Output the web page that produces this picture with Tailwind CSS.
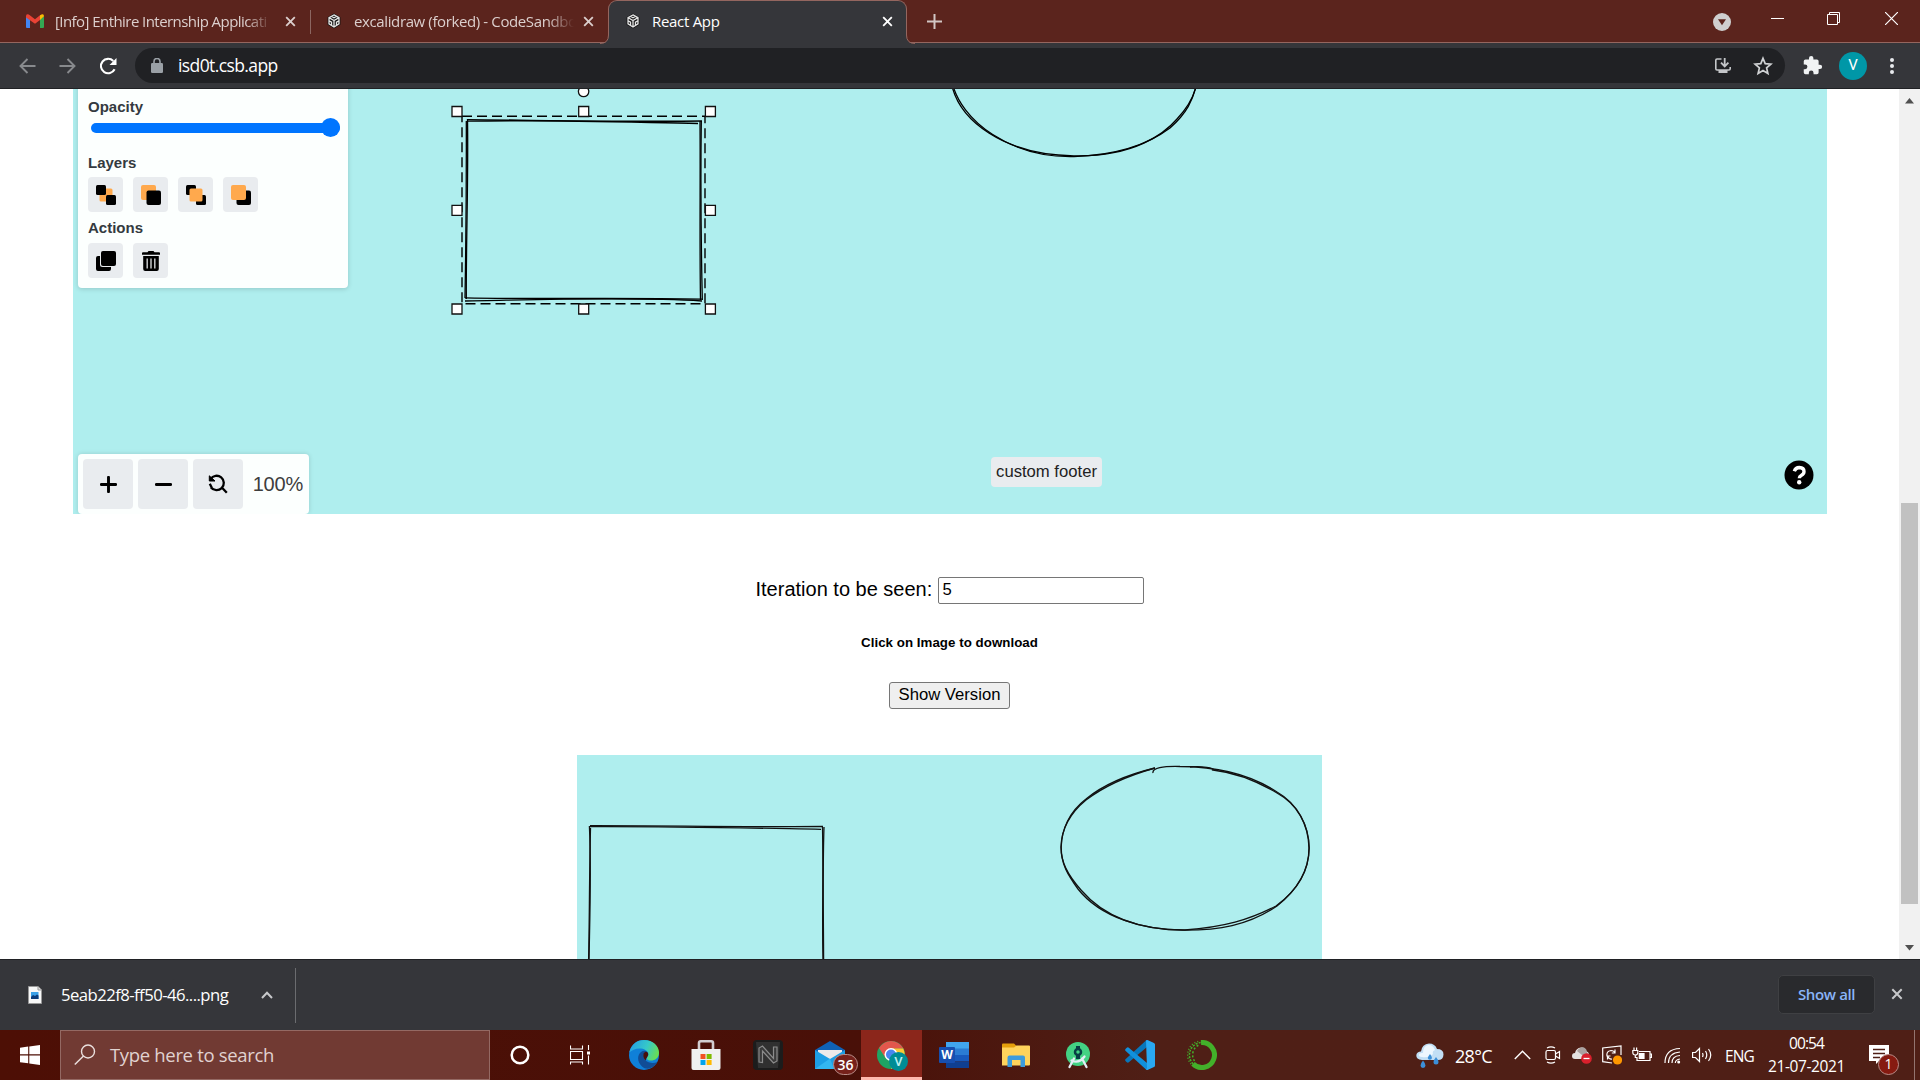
<!DOCTYPE html>
<html lang="en">
<head>
<meta charset="utf-8">
<title>React App</title>
<script src="https://cdn.jsdelivr.net/npm/@tailwindcss/browser@4"></script>
</head>
<body class="w-[1920px] h-[1080px] overflow-hidden flex flex-col bg-white font-['Open_Sans',sans-serif]">
<svg class="hidden">
  <symbol id="box" viewBox="0 0 16 18"><path d="M8 .5 15.3 4.7v8.6L8 17.5.7 13.3V4.7Z" fill="#111"/><path d="M8 2 13.7 5.1v7.2L8 15.8 2.300 12.300V5.100ZM2.300 5.200 8 8.500l5.700-3.300M8 8.500v7.200M5 3.600l3 1.800 3-1.800M2.500 8.800l2.700 1.600v3.500M13.500 8.800l-2.700 1.600v3.500" fill="none" stroke="#e4e4e4" stroke-width="1.500"/></symbol>
  <symbol id="x" viewBox="0 0 12 12"><path d="M1.300 1.300 10.700 10.700M10.700 1.300 1.300 10.700" fill="none" stroke="currentColor" stroke-width="2"/></symbol>
</svg>

<!-- tab strip -->
<header class="h-[43px] shrink-0 bg-[#5b241d] border-b border-[#94665f] flex relative text-[15px] leading-[40px] text-[#dccfcd] whitespace-nowrap">
  <div class="w-[310px] flex items-center pl-[26px]">
    <svg class="w-[18px] h-[14px] shrink-0" viewBox="0 0 18 14"><path d="M0 2v11q0 1 1 1h3V5Z" fill="#4285f4"/><path d="M18 2v11q0 1-1 1h-3V5Z" fill="#34a853"/><path d="M14 1.300 16 .2q2-.4 2 2L14 6Z" fill="#fbbc04"/><path d="M0 2.500Q0-.8 2.800.6L9 5.300 14 1.300V6L9 9.800 0 3.500Z" fill="#ea4335"/></svg>
    <span class="ml-[11px] w-[217px] tracking-[-0.56px] mask-r-from-88% mask-r-to-100%">[Info] Enthire Internship Applicati</span>
    <svg class="w-[11px] h-[11px] ml-[13px] shrink-0"><use href="#x"/></svg>
  </div>
  <div class="w-px h-6 mt-[10px] bg-[#8c6661]"></div>
  <div class="w-[297px] flex items-center pl-[16px]">
    <svg class="w-[14px] h-[16px] shrink-0"><use href="#box"/></svg>
    <span class="ml-[13px] w-[220px] tracking-[-0.38px] mask-r-from-88% mask-r-to-100%">excalidraw (forked) - CodeSandbo</span>
    <svg class="w-[11px] h-[11px] ml-[9px] shrink-0"><use href="#x"/></svg>
  </div>
  <div class="w-[299px] h-[43px] flex items-center pl-[17px] pb-[2px] bg-[#35363a] rounded-t-[9px] border-x border-t border-[#94665f] relative z-10 text-white">
    <svg class="w-[14px] h-[16px] shrink-0"><use href="#box"/></svg>
    <span class="ml-[12px] w-[224px] tracking-[-0.3px]">React App</span>
    <svg class="w-[11px] h-[11px] ml-[6px] shrink-0"><use href="#x"/></svg>
    <svg class="absolute -left-[9px] bottom-[-1px] w-[9px] h-[9px]" viewBox="0 0 9 9"><path d="M9 0V9H0Q8.500 8.500 8.500 0" fill="#35363a"/><path d="M0 8.500Q8.500 8.500 8.500 0" fill="none" stroke="#94665f"/></svg>
    <svg class="absolute -right-[9px] bottom-[-1px] w-[9px] h-[9px]" viewBox="0 0 9 9"><path d="M0 0V9H9Q.5 8.500 .5 0" fill="#35363a"/><path d="M9 8.500Q.5 8.500 .5 0" fill="none" stroke="#94665f"/></svg>
  </div>
  <svg class="w-[15px] h-[15px] ml-[20px] mt-[14px]" viewBox="0 0 15 15"><path d="M7.500 0v15M0 7.500h15" stroke="#d2c6c4" stroke-width="2"/></svg>
  <div class="flex-1"></div>
  <svg class="w-[18px] h-[18px] mt-[13px]" viewBox="0 0 18 18"><circle cx="9" cy="9" r="9" fill="#cfcfcf"/><path d="M5 6.300h8L9 12.300Z" fill="#5b241d"/></svg>
  <svg class="w-[13px] h-[13px] ml-[40px] mt-[12px]" viewBox="0 0 13 13"><path d="M0 6.500h13" stroke="#fff"/></svg>
  <svg class="w-[13px] h-[13px] ml-[43px] mt-[12px]" viewBox="0 0 13 13"><path d="M.5 2.500h10v10H.5ZM2.500 2.500V.5h10v10h-2" fill="none" stroke="#fff"/></svg>
  <svg class="w-[13px] h-[13px] ml-[45px] mr-[22px] mt-[12px]" viewBox="0 0 13 13"><path d="M0 0 13 13M13 0 0 13" fill="none" stroke="#fff" stroke-width="1.200"/></svg>
</header>

<!-- address bar -->
<nav class="h-[46px] shrink-0 bg-[#35363a] border-b border-[#202124] flex items-center">
  <svg class="w-[17px] h-[16px] ml-[19px]" viewBox="0 0 17 16"><path d="M16.500 8H2M8.500 1 1.500 8l7 7" fill="none" stroke="#888a8d" stroke-width="1.900"/></svg>
  <svg class="w-[17px] h-[16px] ml-[23px]" viewBox="0 0 17 16"><path d="M.5 8H15M8.500 1l7 7-7 7" fill="none" stroke="#888a8d" stroke-width="1.900"/></svg>
  <svg class="w-[18px] h-[18px] ml-[23px]" viewBox="0 0 18 18"><path d="M15.600 12.200A7.200 7.200 0 1 1 14.300 4" fill="none" stroke="#fff" stroke-width="2.100"/><path d="M17.500 1v7h-7Z" fill="#fff"/></svg>
  <div class="ml-[18px] w-[1650px] h-[35px] rounded-full bg-[#202124] flex items-center">
    <svg class="w-[12px] h-[15px] ml-[16px]" viewBox="0 0 12 15"><rect y="5" width="12" height="10" rx="1.200" fill="#9aa0a6"/><path d="M3 6V3.500a3 3 0 0 1 6 0V6" fill="none" stroke="#9aa0a6" stroke-width="1.600"/></svg>
    <span class="ml-[15px] text-[17.500px] text-white tracking-[-0.6px] leading-none">isd0t.csb.app</span>
    <div class="flex-1"></div>
    <svg class="w-[16px] h-[16px]" viewBox="0 0 16 16"><path d="M6.500 1H2Q.8 1 .8 2.200v8.600Q.8 12 2 12h12q1.200 0 1.200-1.200V9" fill="none" stroke="#c4c6c9" stroke-width="1.600"/><path d="M3.500 12h9v3h-9Z" fill="#c4c6c9"/><path d="M9.700 0v8M6 4.700l3.700 3.800 3.700-3.800" fill="none" stroke="#c4c6c9" stroke-width="1.800"/></svg>
    <svg class="w-[20px] h-[20px] ml-[22px] mr-[12px]" viewBox="0 0 20 20"><path d="m10 2.300 2.200 5.300 5.700.5-4.300 3.800 1.300 5.600-4.900-3-4.900 3 1.300-5.600L2.100 8.100l5.700-.5Z" fill="none" stroke="#d0d2d4" stroke-width="1.700"/></svg>
  </div>
  <svg class="w-[21px] h-[21px] ml-[17px]" viewBox="0 0 24 24"><path d="M20.500 11H19V7a2 2 0 0 0-2-2h-4V3.500a2.500 2.500 0 0 0-5 0V5H4a2 2 0 0 0-2 2v3.800h1.500a2.700 2.700 0 0 1 0 5.400H2V20a2 2 0 0 0 2 2h3.800v-1.500a2.700 2.700 0 0 1 5.400 0V22H17a2 2 0 0 0 2-2v-4h1.500a2.500 2.500 0 0 0 0-5Z" fill="#f1f3f4"/></svg>
  <div class="ml-[16px] w-[28px] h-[28px] rounded-full bg-[#0097a7] text-white text-[15px] font-[Roboto,sans-serif] flex items-center justify-center">V</div>
  <svg class="w-[4px] h-[16px] ml-[23px]" viewBox="0 0 4 16"><g fill="#e8eaed"><circle cx="2" cy="2" r="2"/><circle cx="2" cy="8" r="2"/><circle cx="2" cy="14" r="2"/></g></svg>
</nav>

<!-- page -->
<div class="h-[870px] shrink-0 flex overflow-hidden font-['Liberation_Sans',Arial,sans-serif]">
  <main class="w-[1899px] flex flex-col items-center overflow-hidden">
    <section class="relative w-[1754px] h-[425px] shrink-0 ml-px bg-[#afeeee] overflow-hidden">
      <svg class="absolute inset-0 w-full h-full" viewBox="73 89 1754 425" fill="none" stroke="#000">
        <g stroke-width="1.300">
          <path d="M467 119.600C530 120 620 122 702 121"/><path d="M467 121.200C550 119.500 620 122 698 123.500"/>
          <path d="M467.500 119C468.500 180 466 240 466.300 299"/><path d="M466.300 121C466.500 180 466 240 465 298"/>
          <path d="M700 121C700.500 180 699.500 240 700.500 300"/><path d="M701.300 121C700.500 180 701 240 702.300 300"/>
          <path d="M465 297.800C540 299.500 620 297.500 702 299.200"/><path d="M465 301C530 300 630 296.500 702 301"/>
          <path d="M950.800 80C957 121 1005 155 1074 155.800C1135 157 1165 133 1177 119C1190 105 1195 93 1196.500 84"/>
          <path d="M951.500 80C960 122 1012 158 1074 156.600C1120 155 1150 143 1170 128C1187 113 1193 100 1196.500 84"/>
        </g>
        <path d="M462 116.300H705V303.800H462Z" stroke-width="1.400" stroke-dasharray="10 5"/>
        <g fill="#fff" stroke="#111" stroke-width="1.300">
          <circle cx="583.600" cy="91.500" r="5.200"/>
          <path d="M452 106.500h10v10h-10ZM578.700 106.500h10v10h-10ZM705.400 106.500h10v10h-10ZM452 205.300h10v10h-10ZM705.400 205.300h10v10h-10ZM452 304h10v10h-10ZM578.700 304h10v10h-10ZM705.400 304h10v10h-10Z"/>
        </g>
      </svg>

      <aside class="absolute left-[5px] -top-[21px] w-[270px] h-[220px] pt-[30px] px-[10px] bg-[#fcfffe] rounded-[4px] shadow-[0_1px_5px_rgba(0,0,0,0.16)] flex flex-col text-[15px] leading-[18px] font-bold text-[#343a40]">
        <div>Opacity</div>
        <div class="mt-[2px] ml-[3px] w-[249px] h-[19px] flex items-center"><div class="h-[10px] flex-1 rounded-full bg-[#0075ff]"></div><div class="w-[19px] h-[19px] -ml-[19px] rounded-full bg-[#0075ff]"></div></div>
        <div class="mt-[17px]">Layers</div>
        <div class="mt-[5px] flex gap-[10px]">
          <div class="w-[35px] h-[35px] rounded-[4px] bg-[#e9ecef] flex items-center justify-center"><svg class="w-5 h-5" viewBox="0 0 20 20"><rect x="3.500" y="3.500" width="13" height="13" rx="1.500" fill="#ffa94d"/><rect width="10" height="10" rx="1.500"/><rect x="10" y="10" width="10" height="10" rx="1.500"/></svg></div>
          <div class="w-[35px] h-[35px] rounded-[4px] bg-[#e9ecef] flex items-center justify-center"><svg class="w-5 h-5" viewBox="0 0 20 20"><rect width="15" height="15" rx="2" fill="#ffa94d"/><rect x="5.500" y="5.500" width="14.500" height="14.500" rx="2"/></svg></div>
          <div class="w-[35px] h-[35px] rounded-[4px] bg-[#e9ecef] flex items-center justify-center"><svg class="w-5 h-5" viewBox="0 0 20 20"><rect width="10" height="10" rx="1.500"/><rect x="10" y="10" width="10" height="10" rx="1.500"/><rect x="3.500" y="3.500" width="13" height="13" rx="1.500" fill="#ffa94d"/></svg></div>
          <div class="w-[35px] h-[35px] rounded-[4px] bg-[#e9ecef] flex items-center justify-center"><svg class="w-5 h-5" viewBox="0 0 20 20"><rect x="5.500" y="5.500" width="14.500" height="14.500" rx="2"/><rect width="15" height="15" rx="2" fill="#ffa94d"/></svg></div>
        </div>
        <div class="mt-[7px]">Actions</div>
        <div class="mt-[6px] flex gap-[10px]">
          <div class="w-[35px] h-[35px] rounded-[4px] bg-[#e9ecef] flex items-center justify-center"><svg class="w-5 h-5" viewBox="0 0 20 20"><rect x="5" width="15" height="15" rx="2"/><path d="M4 5H2Q0 5 0 7v11q0 2 2 2h11q2 0 2-2v-2H6.500Q4 16 4 13.500Z"/></svg></div>
          <div class="w-[35px] h-[35px] rounded-[4px] bg-[#e9ecef] flex items-center justify-center"><svg class="w-[18px] h-5" viewBox="0 0 18 20"><path d="M0 2.200Q0 1.300 1 1.300H5.500L6.500 0h5l1 1.300H17q1 0 1 .9V3.700H0ZM1.200 5H16.800V18q0 2-2 2H3.200q-2 0-2-2Z"/><path d="M5.200 7.500v10M9 7.500v10M12.800 7.500v10" stroke="#c4c6c8" stroke-width="1.500"/></svg></div>
        </div>
      </aside>

      <div class="absolute left-[5px] top-[365px] w-[231px] h-[60px] p-[5px] flex gap-[5px] bg-[#fcfffe] rounded-[4px] shadow-[0_0_5px_rgba(0,0,0,0.14)] text-[20px] text-[#3d3d3d]">
        <div class="w-[50px] h-[50px] rounded-[4px] bg-[#e9ecef] flex items-center justify-center"><svg class="w-[17px] h-[17px]" viewBox="0 0 17 17"><path d="M8.500 1.300v14.400M1.300 8.500h14.400" stroke="#000" stroke-width="2.900" stroke-linecap="round"/></svg></div>
        <div class="w-[50px] h-[50px] rounded-[4px] bg-[#e9ecef] flex items-center justify-center"><svg class="w-[17px] h-[17px]" viewBox="0 0 17 17"><path d="M1.400 8.500h14.200" stroke="#000" stroke-width="3" stroke-linecap="round"/></svg></div>
        <div class="w-[50px] h-[50px] rounded-[4px] bg-[#e9ecef] flex items-center justify-center"><svg class="w-[20px] h-[20px]" viewBox="0 0 20 20" fill="none" stroke="#000" stroke-width="2.300"><path d="M2.600 5A7.200 7.200 0 1 1 3 13.500M14.300 14l4.500 4.800"/><path d="M1.300 1.800V7H7Z" fill="#000" stroke-width="1"/><path d="M1.800 9.800 3.800 13.800"/></svg></div>
        <div class="flex-1 flex items-center justify-end pr-px tracking-[-0.2px]">100%</div>
      </div>
      <div class="absolute left-[918px] top-[368px] w-[111px] h-[30px] bg-[#e9ecef] rounded-[4px] text-[16.670px] leading-[29px] text-[#222] text-center">custom footer</div>
      <svg class="absolute left-[1711px] top-[371px] w-[30px] h-[30px]" viewBox="0 0 30 30"><circle cx="15" cy="15" r="14.500"/><path d="M10.300 11.300Q11.500 7.500 15.300 7.500Q20 7.700 20 11.500Q20 14 17.500 15.300Q15.300 16.500 15.300 18.200" fill="none" stroke="#fff" stroke-width="3.400"/><circle cx="15.200" cy="22.200" r="2.200" fill="#fff"/></svg>
    </section>

    <section class="flex flex-col items-center text-black">
      <label class="mt-[63px] h-[27px] flex items-center text-[20px] leading-[22px]"><span class="pb-[3px] w-[182px]">Iteration to be seen:</span><span class="w-[206px] h-[27px] border border-[#767676] rounded-[2px] pl-1 text-[16.670px] leading-[24px]">5</span></label>
      <h5 class="mt-[31px] h-[16px] text-[13.300px] leading-[16px] font-bold tracking-[0.04px]">Click on Image to download</h5>
      <button class="mt-[31px] w-[121px] h-[27px] border border-[#767676] rounded-[3px] bg-[#efefef] text-[16.670px] leading-[22px] pb-[2px]">Show Version</button>
      <svg class="mt-[46px] w-[745px] h-[204px] bg-[#afeeee] shrink-0" viewBox="577 755 745 204" fill="none" stroke="#111" stroke-width="1.300">
        <path d="M590 825.600C660 825.500 740 827 823 826.500"/><path d="M590 826.600C680 826.300 750 828 821 829.300"/>
        <path d="M589.400 826C591.500 870 589.700 920 589 960"/><path d="M590.500 828C589.300 880 589.500 920 588.600 960"/>
        <path d="M822.500 827C823.500 870 822 920 823 960"/><path d="M824 827C822.500 870 823.500 920 823.600 960"/>
        <path d="M1153 773C1152 768 1163 766 1180 766.500C1213 766.500 1248 773 1277 792C1298 804 1309 826 1309.200 848C1309 870 1297 890 1277 906C1247 926 1218 930 1185 930.200C1138 930 1104 917 1081 890C1067 874 1061 862 1061.200 847C1061.500 830 1069 812 1086 799C1103 785 1126 775 1155 768"/>
        <path d="M1155 768C1123 777 1103 787 1086 800C1069 814 1061.500 830 1061 847C1061 864 1068 875 1078 889C1100 917 1143 930.500 1185 930C1224 927 1249 920 1276 906C1298 890 1309 870 1309 848C1308.500 824 1297 804 1277 793C1252 778 1230 772 1213 770C1215 768 1202 766 1190 767"/>
      </svg>
    </section>
  </main>
  <div class="w-[21px] bg-[#f1f1f1] flex flex-col items-center">
    <svg class="w-[9px] h-[6px] mt-[9px]" viewBox="0 0 9 6"><path d="M4.500 0 9 5.500H0Z" fill="#505050"/></svg>
    <div class="mt-[399px] w-[17px] h-[401px] bg-[#c1c1c1]"></div>
    <svg class="w-[9px] h-[6px] mt-[41px]" viewBox="0 0 9 6"><path d="M4.500 5.500 9 0H0Z" fill="#505050"/></svg>
  </div>
</div>

<!-- downloads -->
<div class="h-[71px] shrink-0 bg-[#35363a] border-t border-[#202124] flex items-center text-white">
  <svg class="w-[14px] h-[18px] ml-[28px] mb-px" viewBox="0 0 14 18"><path d="M.5.500H10l3.500 3.500v13.500H.5Z" fill="#f7f7f7" stroke="#999"/><path d="M10 .5V4h3.500" fill="#ddd" stroke="#999"/><rect x="3" y="6" width="7.500" height="7" fill="#3aa0e8"/><path d="m3 11 2-2 2 1 2-1.500 1.500 1V13H3Z" fill="#0b3a7a"/></svg>
  <span class="ml-[19px] w-[200px] text-[16.700px] tracking-[-0.55px]">5eab22f8-ff50-46....png</span>
  <svg class="w-[12px] h-[8px]" viewBox="0 0 12 8"><path d="M1 7 6 1.800 11 7" fill="none" stroke="#c8c9cb" stroke-width="2"/></svg>
  <div class="ml-[22px] w-px h-[55px] bg-[#6b6c6f]"></div>
  <div class="flex-1"></div>
  <div class="w-[97px] h-[39px] mr-[16px] mb-[2px] rounded-[5px] border border-[#3f4043] bg-[#292a2d] text-[#8ab4f8] text-[15px] font-semibold tracking-[-0.36px] flex items-center justify-center">Show all</div>
  <svg class="w-[12px] h-[12px] mr-[17px] mb-[2px] text-[#c8c9cb]"><use href="#x"/></svg>
</div>

<!-- taskbar -->
<footer class="h-[50px] shrink-0 flex bg-linear-to-r from-[#4d0f05] from-0% via-[#491008] via-45% to-[#4f1f16] to-60% text-white">
  <div class="w-[60px] flex items-center justify-center"><svg class="w-5 h-5" viewBox="0 0 20 20"><path d="M0 2.700 8.200 1.600V9.300H0ZM9.300 1.400 20 0V9.300H9.300ZM0 10.500H8.200V18.300L0 17.200ZM9.300 10.500H20V20L9.300 18.500Z" fill="#fff"/></svg></div>
  <div class="w-[430px] h-[50px] bg-[#713a33] border border-[#946963] flex items-center">
    <svg class="w-[22px] h-[22px] ml-[13px]" viewBox="0 0 22 22"><circle cx="14" cy="7.500" r="6.500" fill="none" stroke="#eadfdd" stroke-width="1.400"/><path d="M9.500 12 .8 20.500" stroke="#eadfdd" stroke-width="1.500"/></svg>
    <span class="ml-[14px] text-[18.500px] tracking-[-0.33px] text-[#e0d2d0]">Type here to search</span>
  </div>
  <div class="w-[60px] flex items-center justify-center"><svg class="w-5 h-5" viewBox="0 0 20 20"><circle cx="10" cy="10" r="8.300" fill="none" stroke="#fff" stroke-width="2.500"/></svg></div>
  <div class="w-[60px] mr-[3px] flex items-center justify-center"><svg class="w-5 h-5" viewBox="0 0 20 20" fill="none" stroke="#fff" stroke-width="1.100"><path d="M.5.500V4H12.500V.5M.5 6.500h12v8H.5ZM.5 19.500V17H12.500V19.500M18.500 0V5M18.500 10.500V19.500"/><path d="M17 6.500h3v3h-3Z" fill="#fff" stroke="none"/></svg></div>
  <div class="w-[62px] flex items-center justify-center"><svg class="w-[30px] h-[30px]" viewBox="0 0 30 30"><defs><linearGradient id="eg" x1="0" x2="1" y1=".3" y2=".6"><stop offset="0" stop-color="#249fe5"/><stop offset=".55" stop-color="#36c9c8"/><stop offset="1" stop-color="#6be04f"/></linearGradient></defs><circle cx="15" cy="15" r="15" fill="#0f80d8"/><path d="M.3 12.500C2 4.500 8 0 15 0C24 0 30 6 30 12.500C30 18 26 20.500 22 20.500C18 20.500 17 18.500 18 17.500C22 13 17 9 12 8.500C7 8 3 10 .3 12.500Z" fill="url(#eg)"/><path d="M12 12C8 15 8 22 13 26.500C18 31 25 28 28.300 22C24 24 15 23 14.500 16Q14 13 18 11.500Q15 10 12 12Z" fill="#114d96"/><path d="M18 17.500Q20 15.500 19 13Q17 10.500 14.500 13.500Q13.500 18 17 20.500Q16.500 19 18 17.500Z" fill="#49100a"/></svg></div>
  <div class="w-[62px] flex items-center justify-center"><svg class="w-[30px] h-[30px]" viewBox="0 0 30 30"><path d="M8 10V3Q8 1.300 9.700 1.300H20.300Q22 1.300 22 3V10" fill="none" stroke="#d2cdd0" stroke-width="2.600"/><path d="M.5 9H29.500V28Q29.500 30 27.500 30H2.500Q.5 30 .5 28Z" fill="#f0f0f0"/><path d="M9.500 14h5v5h-5Z" fill="#f25022"/><path d="M15.600 14h5v5h-5Z" fill="#7fba00"/><path d="M9.500 20h5v5h-5Z" fill="#00a4ef"/><path d="M15.600 20h5v5h-5Z" fill="#ffb900"/></svg></div>
  <div class="w-[62px] flex items-center justify-center"><svg class="w-[30px] h-[30px]" viewBox="0 0 30 30"><rect width="30" height="30" rx="4" fill="#1c1c1c"/><path d="M3 2H27L25 28H5Z" fill="#303030"/><path d="M6 22V8L9.500 6 20.500 18.500V7H24V21L20.500 23 9.500 11V22.500Z" fill="#3a3a3a" stroke="#8b8b8b" stroke-width="1.200"/></svg></div>
  <div class="w-[62px] flex items-center justify-center relative"><svg class="w-[30px] h-[30px]" viewBox="0 0 30 30"><path d="M0 10 15 1 30 10V20H0Z" fill="#1061b5"/><path d="M3 10H27V20H3Z" fill="#eceaea"/><path d="M0 10 15 19 30 10V29H0Z" fill="#1d9ee4"/><path d="M0 29 15 18.500 19 29Z" fill="#33b6f0"/></svg><div class="absolute left-[34px] top-[24px] w-[25px] h-[21px] rounded-full bg-[#76211b] border border-[#b98c88] text-[14px] font-semibold leading-[19px] text-center">36</div></div>
  <div class="w-[61px] mr-px relative flex items-center justify-center bg-[#8b261b] border-b-3 border-[#ffb8ae]">
    <svg class="w-[32px] h-[32px] ml-px mt-[2px]" viewBox="0 0 32 32"><circle cx="15" cy="16" r="14" fill="#1fa463"/><path d="M3 9Q8 2 15 2 23 2 27.500 9.500L15 10 9.500 19Z" fill="#e2574c"/><path d="M15 9.500H27.300Q30.500 17 27 23Q23 30 15 30L21 19Z" fill="#fbc934"/><circle cx="15" cy="15.500" r="6.500" fill="#fff"/><circle cx="15" cy="15.500" r="5" fill="#4a86ef"/><circle cx="22.500" cy="22.500" r="9.500" fill="#008c95"/></svg>
    <span class="absolute left-[31px] top-[22px] w-[13px] text-center text-[13px] leading-[20px] text-[#b8eff0] font-[Roboto,sans-serif] font-medium">V</span>
  </div>
  <div class="w-[62px] relative flex items-center justify-center"><svg class="w-[30px] h-[26px]" viewBox="0 0 30 26"><path d="M7 0H30V7H7Z" fill="#41a5ee"/><path d="M7 6.500H30V13H7Z" fill="#2b7cd3"/><path d="M7 13H30V19.500H7Z" fill="#185abd"/><path d="M7 19.500H30V26H7Z" fill="#103f91"/><rect y="5" width="16" height="16" rx="1" fill="#174fb0"/></svg><span class="absolute left-[16px] top-[17px] w-[16px] text-center text-[12px] leading-[16px] font-bold">W</span></div>
  <div class="w-[62px] flex items-center justify-center"><svg class="w-[28px] h-[24px]" viewBox="0 0 28 24"><path d="M0 1.500Q0 .5 1 .5H12L14.500 3V8H0Z" fill="#e59f0c"/><path d="M0 4.500H12L14.500 2.500H27Q28 2.500 28 3.500V21.500Q28 22.500 27 22.500H0Z" fill="#ffd35c"/><path d="M5.500 24V14.500Q5.500 12.500 7.500 12.500H21Q23 12.500 23 14.500V24H18.500V17H10V24Z" fill="#3d9bdc"/></svg></div>
  <div class="w-[62px] flex items-center justify-center"><svg class="w-[26px] h-[28px]" viewBox="0 0 26 28"><circle cx="13" cy="13" r="12" fill="#43d283"/><path d="M11 5h4V8h-4ZM11 14h4v4h-4Z" fill="#073f45"/><circle cx="13" cy="11" r="3" fill="#43d283" stroke="#073f45" stroke-width="2.500"/><path d="M9 17.500 4.500 26M17 17.500 21.500 26M6.500 19.500Q14 23 19.500 15.500" fill="none" stroke="#e3eef6" stroke-width="2.300" stroke-linecap="round"/></svg></div>
  <div class="w-[62px] flex items-center justify-center"><svg class="w-[30px] h-[30px]" viewBox="0 0 30 30"><path d="M22 7 3.500 22.500Q2.500 23 1.500 22L.5 21Q-.3 20 .7 19L21 0.500 22 0Z" fill="#0876bb"/><path d="M22 23 3.500 7.500Q2.500 7 1.500 8L.5 9Q-.3 10 .7 11L21 29.500 22 30Z" fill="#1190dc"/><path d="M21 .5Q22-.3 23 .2L29 3Q30 3.500 30 4.500V25.500Q30 26.500 29 27L23 29.800Q22 30.300 21 29.500L22 28Z" fill="#29a8f2"/></svg></div>
  <div class="w-[62px] flex items-center justify-center"><svg class="w-[30px] h-[30px]" viewBox="0 0 30 30" fill="none" stroke="#43b02a"><path d="M14 2.500A12.500 12.500 0 1 1 6 23.700" stroke-width="5"/><path d="M6 23.700A12.500 12.500 0 0 1 14 2.500" stroke-width="1.500" stroke-dasharray="2 1.200"/><path d="M4 24A14 14 0 0 1 13 1" stroke-width="1.400" stroke-dasharray="1 2"/><path d="M7.500 21A11 11 0 0 1 13 4.500" stroke-width="1.500" stroke-dasharray="2 2"/></svg></div>
  <div class="flex-1"></div>

  <svg class="w-[28px] h-[26px] mt-[13px]" viewBox="0 0 28 26"><path d="M6 17Q0 16.500 .3 12Q1 8.500 5 8.500Q6 1 13 .5Q19 .5 21 6Q27.500 6 27.500 11.500Q27.300 17 22 17Z" fill="#c2dff5"/><path d="M6 14Q2 13.500 3 11Q5 9.500 7 10Q7 3 12 2Q17 1.500 19 7Q16 8 17 11Q13 15 6 14Z" fill="#eef7fe"/><path d="M7 17.500Q9.500 20.500 9.500 22.500A2.500 2.500 0 0 1 4.500 22.500Q4.500 20.500 7 17.500ZM14 11Q16 13.500 16 15A2.200 2.200 0 0 1 11.700 15Q12 13.500 14 11ZM20 14Q22.500 17 22.500 19A2.500 2.500 0 0 1 17.500 19Q17.500 17 20 14Z" fill="#3c8fd8"/></svg>
  <div class="ml-[11px] w-[52px] text-[18px] leading-[52px] tracking-[-0.7px]">28°C</div>
  <div class="w-[30px] flex items-center justify-center"><svg class="w-[17px] h-[10px]" viewBox="0 0 17 10"><path d="M.8 9 8.500 1.200 16.200 9" fill="none" stroke="#fff" stroke-width="1.400"/></svg></div>
  <div class="w-[30px] flex items-center justify-center"><svg class="w-[16px] h-[18px] ml-[2px]" viewBox="0 0 16 18" fill="none" stroke="#fff" stroke-width="1.200"><rect x="1" y="4.500" width="9.500" height="9" rx="1.500"/><path d="M10.500 8 14.500 5.500V12.500L10.500 10M2 2Q6 -.3 10 2M2 16Q6 18.300 10 16"/></svg></div>
  <div class="w-[30px] flex items-center justify-center"><svg class="w-[20px] h-[18px]" viewBox="0 0 20 18"><path d="M3 13Q0 13 0 10Q0 7 3 7Q4 2 9 1.500Q13 1 14 5Q17 6 17 9V13Z" fill="#e6e2e1"/><path d="M5 5Q8 .5 12 1.500Q15 3 15 6.500L17 9H10Z" fill="#aaa2a0"/><circle cx="14.500" cy="12.500" r="5.300" fill="#d9202c"/><path d="M11.500 12.500h6" stroke="#fff" stroke-width="1.300"/></svg></div>
  <div class="w-[30px] flex items-center justify-center"><svg class="w-[20px] h-[20px]" viewBox="0 0 20 20" fill="none" stroke="#fff" stroke-width="1.200"><path d="M10 18 .7 16.700V3L19 1V10M5 11.500Q4 6 9 5.500Q12 5.500 13 8M13 4.500V8H9.800M5.500 14.500V11H8.500M5.500 11Q7 14.500 10 14"/><circle cx="15.500" cy="15" r="4.600" fill="#ff9800" stroke="none"/></svg></div>
  <div class="w-[30px] flex items-center justify-center"><svg class="w-[20px] h-[16px]" viewBox="0 0 20 16" fill="none" stroke="#fff" stroke-width="1.200"><path d="M7 4.500H18V13.500H5V10M18 7h1.500v3.500H18M.8 3.500H5.800V5.500Q5.800 8 3.300 8Q.8 8 .8 5.500ZM2 .5V3.500M4.600 .5V3.500M3.300 8V10.500H5"/><path d="M7.300 6.500H12V11.500H7.300Z" fill="#fff"/></svg></div>
  <div class="w-[30px] flex items-center justify-center"><svg class="w-[17px] h-[17px]" viewBox="0 0 17 17" fill="none" stroke="#fff" stroke-width="1.200"><path d="M1 16Q1 2 16 1.500M4.500 16Q4.500 6 16 5M8 16Q8 9 16 8.500M11.300 16Q11.500 12.500 16 12"/><circle cx="14.700" cy="15" r="1.500" fill="#fff" stroke="none"/></svg></div>
  <div class="w-[30px] flex items-center justify-center"><svg class="w-[20px] h-[16px]" viewBox="0 0 20 16" fill="none" stroke="#fff" stroke-width="1.200"><path d="M.6 5.500H3.500L7.500 1.500V14.500L3.500 10.500H.6ZM10.500 6Q11.500 8 10.500 10M13.500 4Q16 8 13.500 12M16.500 2Q21 8 16.500 14"/></svg></div>
  <div class="w-[45px] text-center text-[15.500px] leading-[52px] tracking-[-0.8px]">ENG</div>
  <div class="w-[89px] text-center text-[15.500px] leading-[23px] pt-[2px] tracking-[-0.4px]"><div class="tracking-[-0.9px]">00:54</div><div>21-07-2021</div></div>
  <div class="w-[63px] relative"><svg class="absolute left-[18px] top-[15px] w-[20px] h-[20px]" viewBox="0 0 20 20"><path d="M0 0H20V16H10L7 19V16H0Z" fill="#fff"/><path d="M4 4.500H16M4 8.500H16M4 12.500H11" stroke="#4f1f16" stroke-width="1.300"/></svg><div class="absolute left-[27px] top-[24px] w-[21px] h-[21px] rounded-full bg-[#861a10] border border-[#b98c88] text-[14px] leading-[18px] text-center">1</div></div>
  <div class="w-px bg-[#93746f] mr-[5px]"></div>
</footer>
</body>
</html>
